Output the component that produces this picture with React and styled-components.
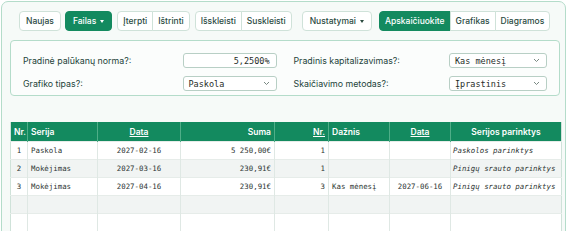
import React from "react";
import styled, { createGlobalStyle } from "styled-components";

const GlobalStyle = createGlobalStyle`
  html, body {
    margin: 0;
    padding: 0;
    background: #ffffff;
  }
  body {
    font-family: Inter, "Noto Sans", sans-serif;
    color: #22463a;
  }
`;

const green = "#138a5f";

const Card = styled.div`
  margin: 1px 4px 0 1px;
  height: 260px;
  border: 1px solid #b4dcca;
  border-radius: 7px;
  background: #f6faf8;
  padding: 8px 5px 0 8px;
  box-sizing: border-box;
`;

const Toolbar = styled.div`
  display: flex;
  align-items: center;
  padding-left: 9px;
  height: 22px;
`;

const Group = styled.div`
  display: flex;
  margin-left: ${(p) => p.$ml || 0}px;
`;

const Btn = styled.button`
  height: 20px;
  padding: 0 ${(p) => p.$px || 5}px;
  font-family: Inter, "Noto Sans", sans-serif;
  font-size: 8.5px;
  font-weight: 500;
  color: ${(p) => (p.$active ? "#ffffff" : "#2a4a3f")};
  background: ${(p) => (p.$active ? green : "#ffffff")};
  border: 1px solid ${(p) => (p.$active ? green : "#cfe2d9")};
  border-radius: 0;
  display: flex;
  align-items: center;
  gap: 4px;
  cursor: pointer;
  box-sizing: border-box;
  margin-left: -1px;
  white-space: nowrap;

  &:first-child {
    margin-left: 0;
    border-top-left-radius: 4px;
    border-bottom-left-radius: 4px;
  }
  &:last-child {
    border-top-right-radius: 4px;
    border-bottom-right-radius: 4px;
  }
`;

const Caret = styled.span`
  width: 0;
  height: 0;
  border-left: 2.5px solid transparent;
  border-right: 2.5px solid transparent;
  border-top: 3px solid currentColor;
  margin-top: 1px;
`;

const Panel = styled.div`
  margin-top: 8px;
  border: 1px solid #b4dcca;
  border-radius: 4px;
  background: #fbfdfc;
  padding: 12px 12px 4px 12px;
  display: grid;
  grid-template-columns: 1fr 1fr;
  column-gap: 17px;
  row-gap: 8px;
`;

const Field = styled.div`
  display: flex;
  align-items: center;
  justify-content: space-between;
  height: 15px;
`;

const Label = styled.span`
  font-size: 8.8px;
  color: #23443a;
`;

const Box = styled.div`
  width: ${(p) => p.$w}px;
  height: 15px;
  box-sizing: border-box;
  border: 1px solid #b8cfc5;
  border-radius: 3px;
  background: #ffffff;
  display: flex;
  align-items: center;
  justify-content: ${(p) => (p.$right ? "flex-end" : "space-between")};
  padding: 0 6px 0 5px;
  font-family: "DejaVu Sans Mono", "Liberation Mono", monospace;
  font-size: 8.5px;
  color: #1f2d28;
`;

const Chevron = () => (
  <svg width="7" height="5" viewBox="0 0 7 5">
    <polyline points="1,1 3.5,3.5 6,1" fill="none" stroke="#6b7c75" strokeWidth="0.9" />
  </svg>
);

const Table = styled.table`
  margin-top: 26px;
  width: 551px;
  border-collapse: collapse;
  table-layout: fixed;
  background: #ffffff;
  border-left: 1px solid #cfe2d9;
  border-right: 1px solid #cfe2d9;
`;

const Th = styled.th`
  background: ${green};
  color: #ffffff;
  font-size: 8.5px;
  font-weight: 600;
  height: 19px;
  padding: 0 3px;
  text-align: ${(p) => p.$align || "left"};
  text-decoration: ${(p) => (p.$u ? "underline" : "none")};
  border-left: 1px solid #4fae88;
  &:first-child {
    border-left: none;
  }
`;

const Tr = styled.tr`
  background: ${(p) => (p.$shade ? "#f1f4f3" : "#ffffff")};
`;

const Td = styled.td`
  height: 17px;
  padding: 0 3px 0 ${(p) => (p.$italic ? 2 : 3)}px;
  font-family: "DejaVu Sans Mono", "Liberation Mono", monospace;
  font-size: 7.4px;
  color: #2e3633;
  font-style: ${(p) => (p.$italic ? "italic" : "normal")};
  text-align: ${(p) => p.$align || "left"};
  border-left: 1px solid #dfe8e4;
  border-top: 1px solid #e6ece9;
  white-space: nowrap;
  overflow: hidden;
  &:first-child {
    border-left: none;
  }
`;

const cols = [17, 70, 83, 94, 54, 61, 61, 111];

const rows = [
  ["1", "Paskola", "2027-02-16", "5 250,00€", "1", "", "", "Paskolos parinktys"],
  ["2", "Mokėjimas", "2027-03-16", "230,91€", "1", "", "", "Pinigų srauto parinktys"],
  ["3", "Mokėjimas", "2027-04-16", "230,91€", "3", "Kas mėnesį", "2027-06-16", "Pinigų srauto parinktys"],
  ["", "", "", "", "", "", "", ""],
  ["", "", "", "", "", "", "", ""],
  ["", "", "", "", "", "", "", ""],
];

const align = ["center", "left", "center", "right", "right", "left", "center", "left"];

export default function App() {
  return (
    <>
      <GlobalStyle />
      <Card>
        <Toolbar>
          <Group>
            <Btn $px={6}>Naujas</Btn>
          </Group>
          <Group $ml={4}>
            <Btn $active $px={7}>
              Failas <Caret />
            </Btn>
          </Group>
          <Group $ml={5}>
            <Btn>Įterpti</Btn>
            <Btn>Ištrinti</Btn>
          </Group>
          <Group $ml={5}>
            <Btn>Išskleisti</Btn>
            <Btn>Suskleisti</Btn>
          </Group>
          <Group $ml={10}>
            <Btn $px={7}>
              Nustatymai <Caret />
            </Btn>
          </Group>
          <Group $ml={7}>
            <Btn $active>Apskaičiuokite</Btn>
            <Btn>Grafikas</Btn>
            <Btn>Diagramos</Btn>
          </Group>
        </Toolbar>

        <Panel>
          <Field>
            <Label>Pradinė palūkanų norma?:</Label>
            <Box $w={94} $right>5,2500%</Box>
          </Field>
          <Field>
            <Label>Pradinis kapitalizavimas?:</Label>
            <Box $w={98}>
              Kas mėnesį <Chevron />
            </Box>
          </Field>
          <Field>
            <Label>Grafiko tipas?:</Label>
            <Box $w={94}>
              Paskola <Chevron />
            </Box>
          </Field>
          <Field>
            <Label>Skaičiavimo metodas?:</Label>
            <Box $w={98}>
              Įprastinis <Chevron />
            </Box>
          </Field>
        </Panel>

        <Table>
          <colgroup>
            {cols.map((w, i) => (
              <col key={i} style={{ width: w }} />
            ))}
          </colgroup>
          <thead>
            <tr>
              <Th>Nr.</Th>
              <Th>Serija</Th>
              <Th $align="center" $u>Data</Th>
              <Th $align="right">Suma</Th>
              <Th $align="right" $u>Nr.</Th>
              <Th>Dažnis</Th>
              <Th $align="center" $u>Data</Th>
              <Th $align="center">Serijos parinktys</Th>
            </tr>
          </thead>
          <tbody>
            {rows.map((r, i) => (
              <Tr key={i} $shade={i % 2 === 1}>
                {r.map((c, j) => (
                  <Td key={j} $align={align[j]} $italic={j === 7}>
                    {c}
                  </Td>
                ))}
              </Tr>
            ))}
          </tbody>
        </Table>
      </Card>
    </>
  );
}
